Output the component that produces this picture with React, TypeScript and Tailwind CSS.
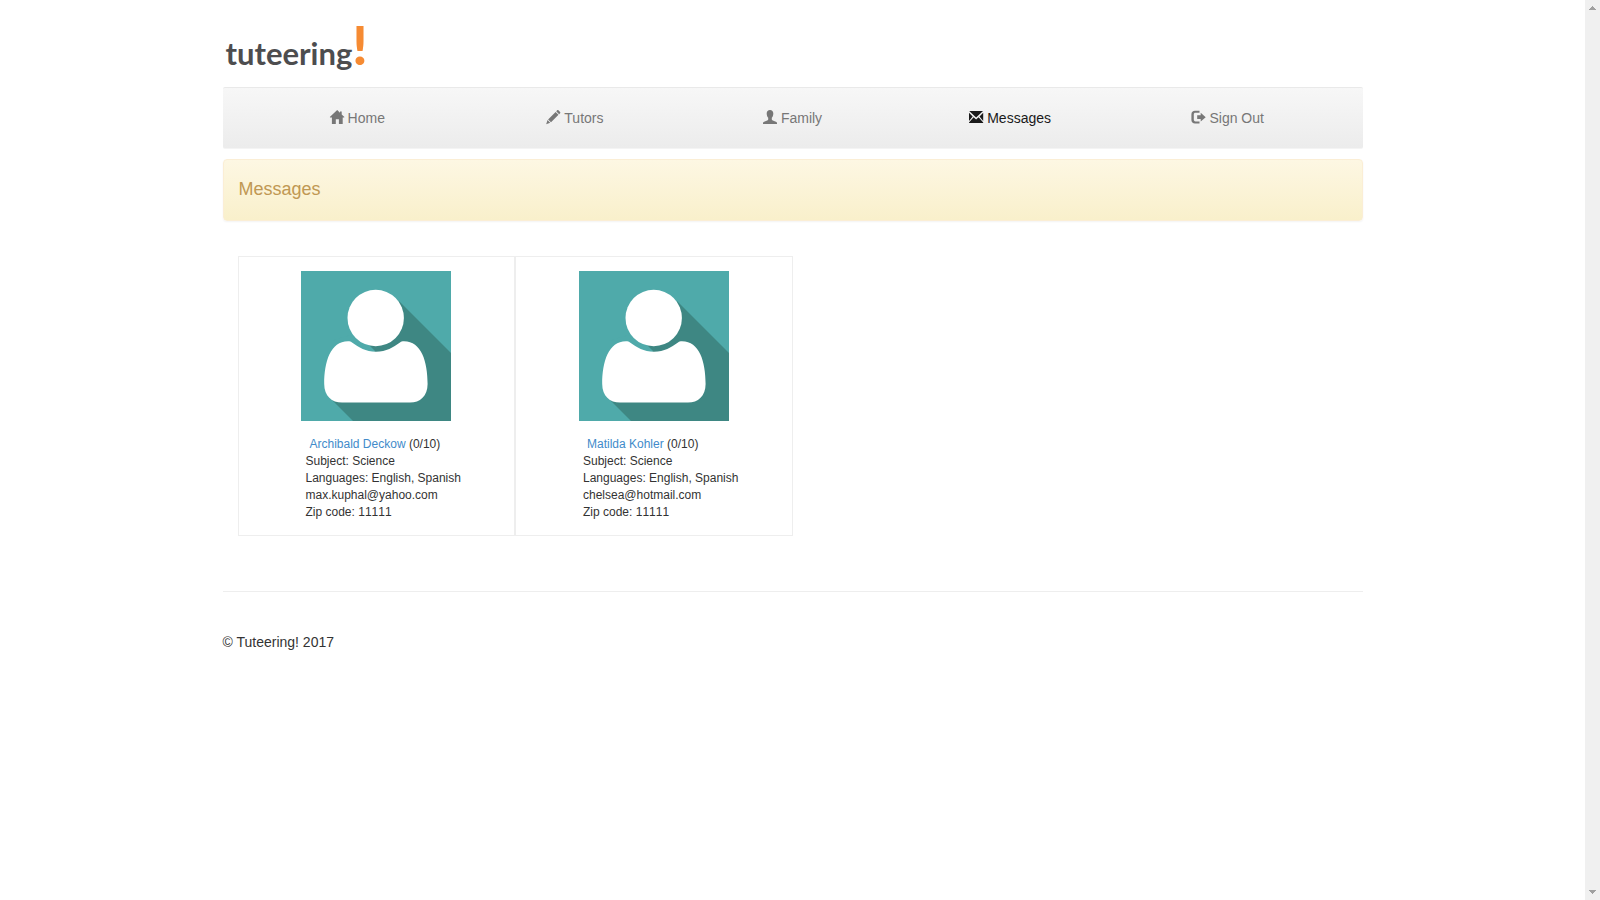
import type { ReactNode } from 'react';
import clsx from 'clsx';

const navItems = [
    { label: 'Home', icon: <HomeIcon /> },
    { label: 'Tutors', icon: <PencilIcon /> },
    { label: 'Family', icon: <UserIcon /> },
    { label: 'Messages', icon: <EnvelopeIcon />, active: true },
    { label: 'Sign Out', icon: <LogOutIcon /> },
];

const tutors = [
    { name: 'Archibald Deckow', rating: '0/10', subject: 'Science', languages: 'English, Spanish', email: 'max.kuphal@yahoo.com', zip: '11111' },
    { name: 'Matilda Kohler', rating: '0/10', subject: 'Science', languages: 'English, Spanish', email: 'chelsea@hotmail.com', zip: '11111' },
];

export default function App() {
    return (
        <div className="flex min-h-screen bg-white font-['Liberation_Sans',Arial,sans-serif] text-sm text-[#333]">
            <div className="min-w-0 flex-1">
                <div className="mx-auto max-w-[1170px] px-[15px]">
                    <Logo />

                    <nav className="rounded-xs border-y border-t-[#e9e9e9] border-b-[#f4f4f4] bg-linear-to-b from-[#f7f7f7] to-[#ececec] px-[26px] py-5">
                        <ul className="grid grid-cols-5">
                            {navItems.map((item) => (
                                <li key={item.label} className="flex justify-center">
                                    <a
                                        href="#"
                                        className={clsx('flex items-center gap-1 leading-5', item.active ? 'text-[#1a1a1a]' : 'text-[#777]')}
                                    >
                                        {item.icon}
                                        {item.label}
                                    </a>
                                </li>
                            ))}
                        </ul>
                    </nav>

                    <div className="mt-2.5 rounded border border-[#fbeed5] bg-linear-to-b from-[#fdf7e3] to-[#f9f0cb] px-[15px] pt-[19px] pb-[21px] shadow-[0_1px_2px_rgba(0,0,0,0.05)]">
                        <h1 className="text-lg leading-5 text-[#c09853]">Messages</h1>
                    </div>

                    <main className="mt-[35px] grid grid-cols-4 px-[15px]">
                        {tutors.map((tutor) => (
                            <TutorCard key={tutor.email} tutor={tutor} />
                        ))}
                    </main>

                    <hr className="mt-[55px] border-[#eee]" />
                    <footer className="py-10 leading-5">© Tuteering! 2017</footer>
                </div>
            </div>
            <ScrollTrack />
        </div>
    );
}

function Logo() {
    return (
        <a href="#" className="flex h-[87px] items-baseline pt-[18px] pl-[3px] font-['Lato',sans-serif]">
            <span className="text-[31px] leading-none font-bold text-[#4d4d4f]">tuteering</span>
            <span className="text-[54px] leading-none font-black text-[#f68b33]">!</span>
        </a>
    );
}

function TutorCard({ tutor }: { tutor: (typeof tutors)[number] }) {
    return (
        <article className="border border-[#eee] py-3.5">
            <Avatar />
            <div className="mt-[15px] ml-[67px] text-xs leading-[17px] [font-kerning:none]">
                <p className="pl-1">
                    <a href="#" className="text-[#428bca]">{tutor.name}</a> ({tutor.rating})
                </p>
                <p>Subject: {tutor.subject}</p>
                <p>Languages: {tutor.languages}</p>
                <p>{tutor.email}</p>
                <p>Zip code: {tutor.zip}</p>
            </div>
        </article>
    );
}

function Avatar() {
    return (
        <svg viewBox="0 0 150 150" className="mx-auto block size-[150px]" aria-hidden="true">
            <path fill="#4faaaa" d="M0 0h150v150H0z" />
            <path fill="#3e8783" d="M98 30 150 82v68H52L31 129 60 70z" />
            <path fill="#4faaaa" d="M30 70 56 62 74 80 60 100 30 100z" />
            <circle cx="74.700" cy="47" r="28.200" fill="#fff" />
            <path fill="#fff" d="M47 70.300c2 0 2.500.2 4 1.200 7 4.800 13.500 9.200 24 9.200s17-4.400 24-9.200c1.500-1 2-1.200 4-1.200 17.500 0 23.600 20.500 23.600 42.700 0 12-7.600 18.600-17.600 18.600H41c-10 0-17.800-6.600-17.800-18.600 0-22.200 6.300-42.700 23.800-42.700z" />
        </svg>
    );
}

function ScrollTrack() {
    return (
        <div className="sticky top-0 flex h-screen w-[15px] shrink-0 flex-col items-center justify-between bg-[#f0f0f0] py-1.5" aria-hidden="true">
            <svg viewBox="0 0 7 4" className="h-1 w-[7px]" fill="#a0a0a0" shapeRendering="crispEdges">
                <path d="M3 0h1v1h1v1h1v1h1v1H0V3h1V2h1V1h1z" />
            </svg>
            <svg viewBox="0 0 7 4" className="h-1 w-[7px]" fill="#a0a0a0" shapeRendering="crispEdges">
                <path d="M0 0h7v1H6v1H5v1H4v1H3V3H2V2H1V1H0z" />
            </svg>
        </div>
    );
}

function Icon({ children }: { children: ReactNode }) {
    return (
        <svg viewBox="0 0 14 14" className="mb-0.5 size-3.5 shrink-0 overflow-visible" fill="currentColor" aria-hidden="true">
            {children}
        </svg>
    );
}

function HomeIcon() {
    return (
        <Icon>
            <path d="M7.200 0L10 2.800V1.400h1.700v3l2.700 2.700-.3.500h-1.400V14H8.900V9.200H5.800V14H1.900V7.600H.1L-.2 7.100z" />
        </Icon>
    );
}

function PencilIcon() {
    return (
        <Icon>
            <path d="M11.200.3c.4-.4.800-.4 1.200 0l1.700 1.700c.4.400.4.800 0 1.200l-1 1L10.200 1.300zM9.600 1.900l2.900 2.900-7.500 7.500-2.900-2.900zM1.500 10l2.700 2.700L.2 14.200z" />
        </Icon>
    );
}

function UserIcon() {
    return (
        <Icon>
            <path d="M7 0c2 0 3.300 1.400 3.300 3.500 0 1.700-.6 3.300-1.500 4.300v1.600c0 .5.400.8 1 1l3.100 1.300c.7.300 1.100.7 1.100 1.400v.9H0v-.9c0-.7.400-1.100 1.100-1.400l3.100-1.300c.6-.2 1-.5 1-1V7.800c-.9-1-1.500-2.600-1.500-4.300C3.700 1.400 5 0 7 0z" />
        </Icon>
    );
}

function EnvelopeIcon() {
    return (
        <Icon>
            <path d="M.2 1h13.800L7.100 7.400zM0 2.700l3.700 3.700L0 11zM14.200 2.700V11l-3.700-4.600zM4.600 7.300l2.500 2.300 2.500-2.300 4.600 5.100v.6H0v-.6z" />
        </Icon>
    );
}

function LogOutIcon() {
    return (
        <Icon>
            <path d="M4 .8h4.500v2h-4C3.300 2.800 2.800 3.400 2.800 4.600v5c0 1.200.5 1.800 1.700 1.800h4v2H4C1.800 13.400.4 12.200.4 10V4.400C.4 2.200 1.800.8 4 .8z" />
            <path d="M9.700 2.800l5 4.400-5 4.400V9.100H6.200V5.300h3.500z" />
        </Icon>
    );
}
